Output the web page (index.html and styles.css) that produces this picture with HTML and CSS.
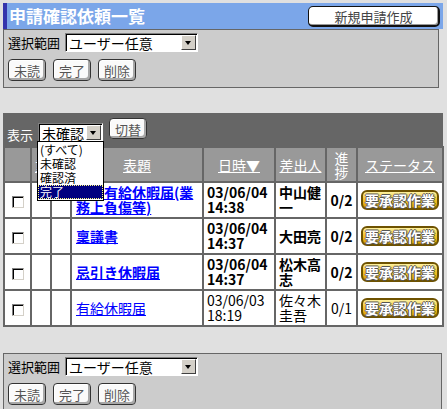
FILE: index.html
```html
<!DOCTYPE html>
<html lang="ja">
<head>
    <meta charset="UTF-8">
    <meta name="viewport" content="width=device-width, initial-scale=1.0">
    <title>申請確認依頼一覧</title>
    <link rel="stylesheet" href="styles.css">
</head>
<body>
    <div class="page">
        <div class="titlebar">
            <h1>申請確認依頼一覧</h1>
            <button class="btn btn-new">新規申請作成</button>
        </div>

        <div class="panel panel-top">
            <div class="range">
                <span class="label">選択範囲</span>
                <div class="select select-range"><span class="value">ユーザー任意</span><span class="arrow"></span></div>
            </div>
            <div class="actions">
                <button class="btn">未読</button>
                <button class="btn">完了</button>
                <button class="btn">削除</button>
            </div>
        </div>

        <div class="list">
            <div class="listbar">
                <span class="label">表示</span>
                <div class="select select-filter">
                    <span class="value">未確認</span><span class="arrow"></span>
                    <ul class="dropdown">
                        <li>(すべて)</li>
                        <li>未確認</li>
                        <li>確認済</li>
                        <li class="selected">完了</li>
                    </ul>
                </div>
                <button class="btn btn-switch">切替</button>
            </div>

            <table class="requests">
                <colgroup>
                    <col class="c-check">
                    <col class="c-flag">
                    <col class="c-flag">
                    <col class="c-title">
                    <col class="c-date">
                    <col class="c-from">
                    <col class="c-prog">
                    <col class="c-status">
                </colgroup>
                <thead>
                    <tr>
                        <th></th>
                        <th><a href="#">重</a></th>
                        <th><a href="#">添</a></th>
                        <th><a href="#">表題</a></th>
                        <th><a href="#">日時▼</a></th>
                        <th><a href="#">差出人</a></th>
                        <th class="narrow">進<br>捗</th>
                        <th><a href="#">ステータス</a></th>
                    </tr>
                </thead>
                <tbody>
                    <tr class="unread r1">
                        <td class="check"><span class="box"></span></td>
                        <td></td>
                        <td></td>
                        <td class="title"><a href="#">特別有給休暇届(業務上負傷等)</a></td>
                        <td class="date">03/06/04<br>14:38</td>
                        <td class="from">中山健一</td>
                        <td class="prog">0/2</td>
                        <td class="status"><span class="badge">要承認作業</span></td>
                    </tr>
                    <tr class="unread r2">
                        <td class="check"><span class="box"></span></td>
                        <td></td>
                        <td></td>
                        <td class="title"><a href="#">稟議書</a></td>
                        <td class="date">03/06/04<br>14:37</td>
                        <td class="from">大田亮</td>
                        <td class="prog">0/2</td>
                        <td class="status"><span class="badge">要承認作業</span></td>
                    </tr>
                    <tr class="unread r3">
                        <td class="check"><span class="box"></span></td>
                        <td></td>
                        <td></td>
                        <td class="title"><a href="#">忌引き休暇届</a></td>
                        <td class="date">03/06/04<br>14:37</td>
                        <td class="from">松木高志</td>
                        <td class="prog">0/2</td>
                        <td class="status"><span class="badge">要承認作業</span></td>
                    </tr>
                    <tr class="r4">
                        <td class="check"><span class="box"></span></td>
                        <td></td>
                        <td></td>
                        <td class="title"><a href="#">有給休暇届</a></td>
                        <td class="date">03/06/03<br>18:19</td>
                        <td class="from">佐々木<br>圭吾</td>
                        <td class="prog">0/1</td>
                        <td class="status"><span class="badge">要承認作業</span></td>
                    </tr>
                </tbody>
            </table>
        </div>

        <div class="panel panel-bottom">
            <div class="range">
                <span class="label">選択範囲</span>
                <div class="select select-range"><span class="value">ユーザー任意</span><span class="arrow"></span></div>
            </div>
            <div class="actions">
                <button class="btn">未読</button>
                <button class="btn">完了</button>
                <button class="btn">削除</button>
            </div>
        </div>
    </div>
</body>
</html>
```

FILE: styles.css
```css
body {
    margin: 0;
    padding: 3px 4px 0 3px;
    background: #e0e0e0;
    font-family: "Noto Sans CJK JP", "Noto Sans", sans-serif;
    font-size: 13px;
    color: #000;
}
.page {
    width: 440px;
}
.titlebar {
    display: flex;
    justify-content: space-between;
    align-items: center;
    height: 26px;
    background: #7ba6e9;
    border-left: 4px solid #3434ac;
    padding-right: 3px;
}
.titlebar h1 {
    margin: 0;
    padding-left: 2px;
    font-size: 17px;
    line-height: 20px;
    color: #fff;
    font-weight: bold;
}
.btn {
    font-family: inherit;
    font-size: 13px;
    line-height: 16px;
    color: #555;
    background: #fafafa;
    border: 1px solid #333;
    border-radius: 4px;
    box-shadow: inset -2px -2px 0 #a8a8a8, inset 1px 1px 0 #fff;
    padding: 2px 0 0;
    height: 22px;
    width: 38px;
    cursor: pointer;
}
.btn-new {
    width: 132px;
    height: 21px;
    background: #fff;
    border-right-width: 2px;
    border-bottom-width: 2px;
    border-color: #111;
    box-shadow: inset -1px -1px 0 #999;
    border-radius: 5px;
    color: #444;
}
.panel {
    box-sizing: border-box;
    height: 59px;
    background: #cccccc;
    border: 1px solid #666;
    padding: 3px 4px;
}
.panel-top {
    width: 436px;
}
.panel-bottom {
    width: 439px;
    margin-top: 26px;
}
.range {
    display: flex;
    align-items: center;
}
.label {
    font-size: 13px;
}
.select {
    position: relative;
    display: flex;
    align-items: center;
    box-sizing: border-box;
    background: #fff;
    border: 1px solid;
    border-color: #808080 #fff #fff #808080;
    box-shadow: inset 1px 1px 0 #000;
    height: 19px;
    padding-left: 3px;
    font-size: 14px;
}
.select .value {
    flex: 1;
    line-height: 16px;
}
.select .arrow {
    position: relative;
    box-sizing: border-box;
    width: 15px;
    height: 15px;
    margin-right: 1px;
    background: #d4d0c8;
    border: 1px solid;
    border-color: #fff #404040 #404040 #fff;
}
.select .arrow::after {
    content: "";
    position: absolute;
    left: 3px;
    top: 5px;
    border-top: 4px solid #000;
    border-left: 3.5px solid transparent;
    border-right: 3.5px solid transparent;
}
.select-range {
    width: 133px;
    margin-left: 5px;
}
.actions {
    display: flex;
    gap: 7px;
    margin-top: 7px;
}
.list {
    margin-top: 25px;
}
.listbar {
    display: flex;
    align-items: flex-start;
    box-sizing: border-box;
    height: 33px;
    background: #666;
    padding: 5px 4px 0;
    color: #fff;
}
.listbar .label {
    margin-top: 7px;
}
.select-filter {
    width: 65px;
    margin-top: 5px;
    margin-left: 5px;
    color: #000;
}
.btn-switch {
    margin-left: 6px;
    height: 21px;
}
.dropdown {
    position: absolute;
    left: -2px;
    top: 17px;
    z-index: 2;
    width: 65px;
    margin: 0;
    padding: 1px 0;
    list-style: none;
    background: #fff;
    border: 1px solid #000;
    font-size: 12px;
    line-height: 14px;
}
.dropdown li {
    padding-left: 2px;
    height: 14px;
}
.dropdown li.selected {
    background: #000080;
    color: #fff;
    outline: 1px dotted #ffff80;
    outline-offset: -1px;
}
.requests {
    width: 439px;
    table-layout: fixed;
    border-collapse: collapse;
    background: #fff;
    font-size: 14px;
    line-height: 15px;
}
.c-check { width: 27px; }
.c-flag { width: 20px; }
.c-title { width: 132px; }
.c-date { width: 72px; }
.c-from { width: 51px; }
.c-prog { width: 31px; }
.c-status { width: 86px; }
.requests th,
.requests td {
    border: 2px solid #666;
    padding: 2px 3px;
    vertical-align: middle;
}
.requests th {
    height: 29px;
    background: #999;
    color: #fff;
    font-weight: normal;
    line-height: 14px;
    text-align: center;
    overflow: hidden;
}
.requests th a {
    color: #fff;
}
.requests td.title a {
    color: #0000ff;
}
.requests tr.unread td {
    font-weight: bold;
}
.r1 td { height: 30px; }
.r2 td { height: 29px; }
.r3 td { height: 29px; }
.r4 td { height: 28px; }
.requests td.check {
    text-align: center;
    padding: 0;
}
.box {
    display: inline-block;
    box-sizing: border-box;
    width: 12px;
    height: 12px;
    vertical-align: middle;
    background: #fff;
    border: 1px solid;
    border-color: #808080 #d4d0c8 #d4d0c8 #808080;
    box-shadow: inset 1px 1px 0 #000;
}
.requests td.title {
    padding-left: 4px;
}
.requests td.prog {
    text-align: center;
    padding: 2px 0;
}
.requests td.status {
    text-align: center;
    padding: 2px 0;
}
.badge {
    display: inline-block;
    box-sizing: border-box;
    width: 78px;
    height: 20px;
    border: 2px solid #6e5200;
    border-radius: 6px;
    background: linear-gradient(#fff2a0, #f2c530 45%, #d9a000);
    box-shadow: inset 0 -1px 0 #b08000;
    color: #fff;
    font-weight: bold;
    font-size: 14px;
    line-height: 16px;
    text-shadow: 1px 0 #555, -1px 0 #555, 0 1px #555, 0 -1px #555;
}
```
